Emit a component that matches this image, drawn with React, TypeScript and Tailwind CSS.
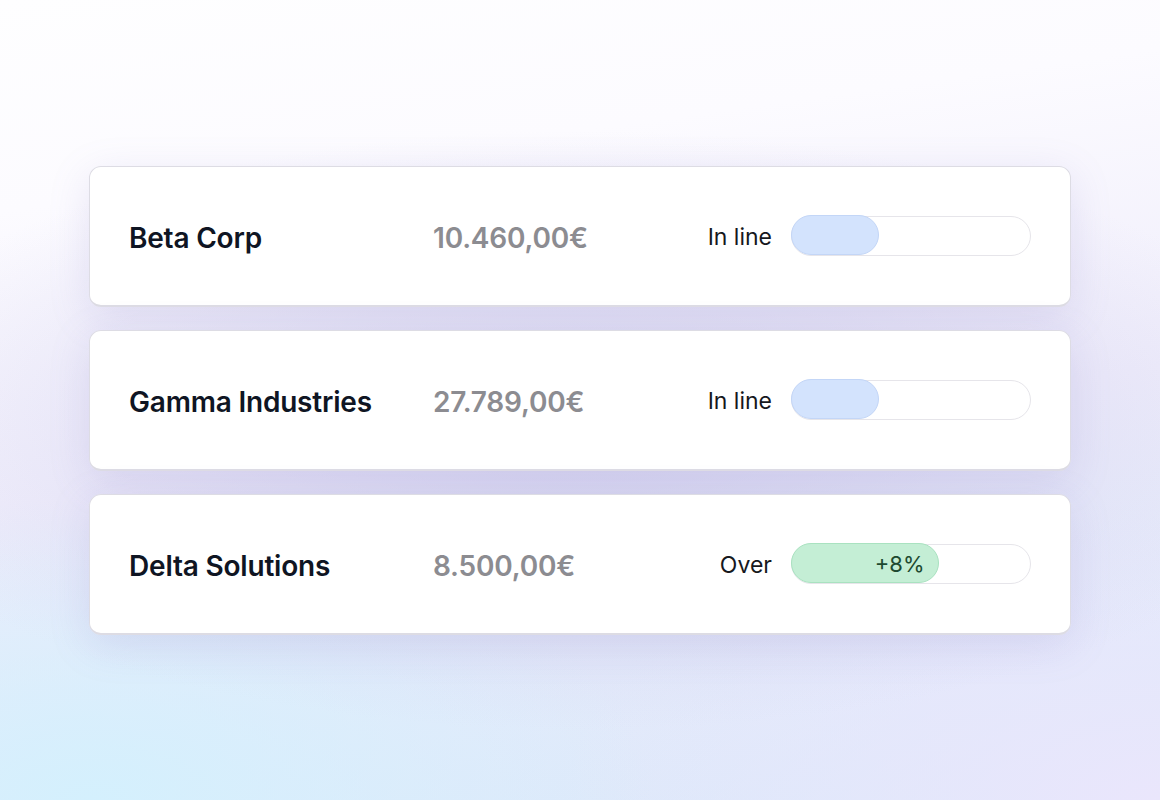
import React from "react";

type Row = {
  name: string;
  amount: string;
  status: string;
  fill: number;
  tone: "blue" | "green";
  label?: string;
};

const rows: Row[] = [
  { name: "Beta Corp", amount: "10.460,00€", status: "In line", fill: 88, tone: "blue" },
  { name: "Gamma Industries", amount: "27.789,00€", status: "In line", fill: 88, tone: "blue" },
  { name: "Delta Solutions", amount: "8.500,00€", status: "Over", fill: 148, tone: "green", label: "+8%" },
];

function Card({ row }: { row: Row }) {
  return (
    <div className="flex h-[141px] items-center rounded-[12px] border-[1.5px] border-[#dddce4] border-b-[2.5px] bg-white pl-[39px] pr-[39px]">
      <div className="w-[304px] pt-[4px] text-[28px] font-semibold tracking-[-0.2px] text-[#0f1523]">{row.name}</div>
      <div className="flex-1 pt-[4px] text-[28px] font-semibold tracking-[-0.2px] text-[#8c8c91]">{row.amount}</div>
      <div className="flex items-center gap-[19px]">
        <div className="pt-[3px] text-[23px] text-[#16181d]">{row.status}</div>
        <div className="flex h-[40px] w-[240px] items-stretch rounded-full border-[1.5px] border-[#e6e5ea] bg-white">
          <div
            className={
              row.tone === "blue"
                ? "-my-[1.5px] -ml-[1.5px] flex h-[40px] items-center justify-end rounded-full border-[1.5px] border-[#c3d6f7] bg-[#d3e3fd] pr-[13px]"
                : "-my-[1.5px] -ml-[1.5px] flex h-[40px] items-center justify-end rounded-full border-[1.5px] border-[#a9e2c0] bg-[#c4eed5] pr-[13px] pt-[2px] text-[22px] text-[#1d4a30]"
            }
            style={{ width: row.fill }}
          >
            {row.label}
          </div>
        </div>
      </div>
    </div>
  );
}

export default function App() {
  return (
    <div
      className="flex h-[800px] w-[1160px] items-center justify-center overflow-hidden bg-[radial-gradient(ellipse_760px_300px_at_50%_430px,rgba(195,193,232,0.55),rgba(195,193,232,0)_100%),radial-gradient(ellipse_560px_300px_at_8%_100%,rgba(212,240,253,1),rgba(212,240,253,0)_100%),radial-gradient(ellipse_600px_300px_at_100%_100%,rgba(234,230,252,1),rgba(234,230,252,0)_100%),linear-gradient(172deg,#fefeff_0%,#fcfbff_22%,#efedfb_55%,#dae8fa_100%)]"
      style={{ fontFamily: "Inter, 'Noto Sans', sans-serif" }}
    >
      <div className="flex w-[982px] flex-col gap-[23px]">
        {rows.map((r) => (
          <div key={r.name} className="rounded-[12px] shadow-[0_10px_40px_rgba(140,130,200,0.18)]">
            <Card row={r} />
          </div>
        ))}
      </div>
    </div>
  );
}
